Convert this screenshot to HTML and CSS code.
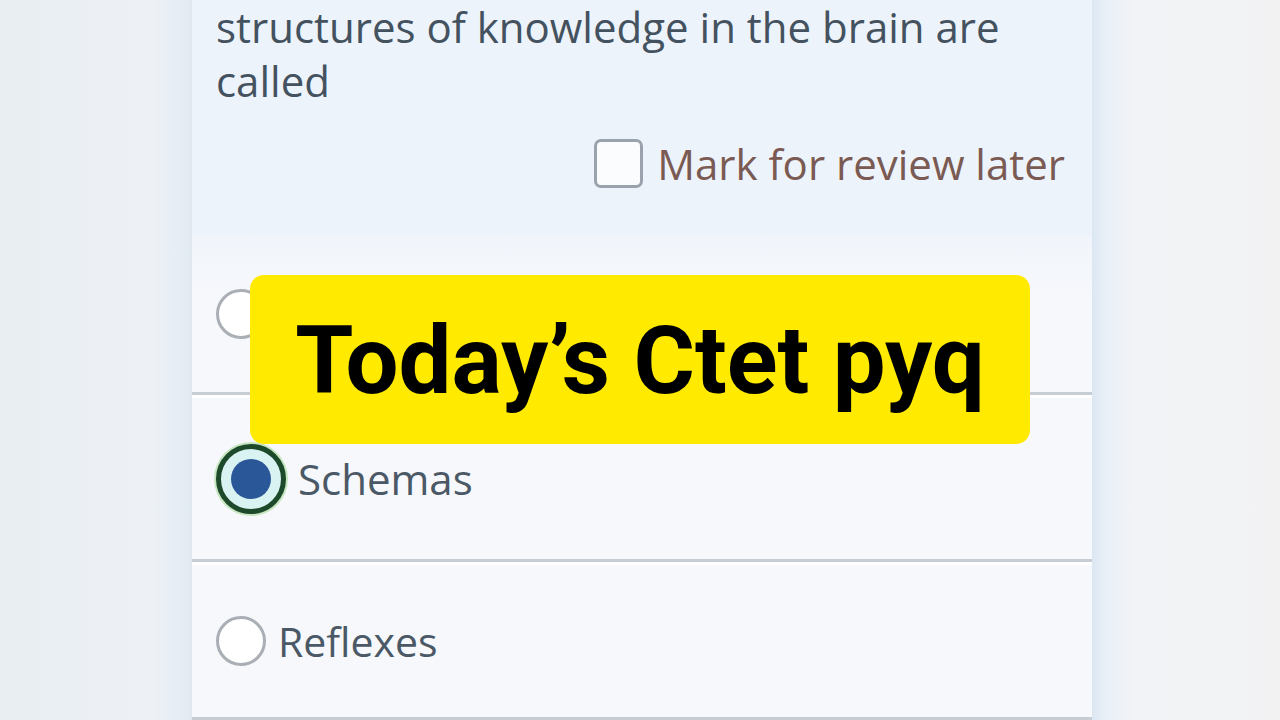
FILE: index.html
```html
<!DOCTYPE html>
<html>
<head>
<meta charset="utf-8">
<link rel="stylesheet" href="styles.css">
</head>
<body>
<div class="page">
  <div class="side side-left"></div>
  <main class="card">
    <section class="question">
      <p class="q-text">structures of knowledge in the brain are<br>called</p>
      <label class="review">
        <span class="checkbox"></span>
        <span class="review-label">Mark for review later</span>
      </label>
    </section>
    <div class="option option-first">
      <span class="radio"></span>
    </div>
    <div class="option option-selected">
      <span class="radio radio-on"><span class="dot"></span></span>
      <span class="opt-label">Schemas</span>
    </div>
    <div class="option option-last">
      <span class="radio"></span>
      <span class="opt-label opt-label-last">Reflexes</span>
    </div>
  </main>
  <div class="side side-right"></div>
  <div class="banner">Today’s Ctet pyq</div>
</div>
</body>
</html>
```
FILE: styles.css
```css
html, body {
  margin: 0;
  padding: 0;
}
body {
  width: 1280px;
  height: 720px;
  overflow: hidden;
  background: #eef1f5;
  font-family: "Open Sans", "Noto Sans", sans-serif;
}
.page {
  position: relative;
  display: grid;
  grid-template-columns: 190px 902px 1fr;
  height: 720px;
}
.side-left {
  background: linear-gradient(90deg, #e9eef3 0%, #edf1f6 80%, #e3ebf3 100%);
}
.side-right {
  background: linear-gradient(90deg, #dbe7f3 0px, #e9f0f7 14px, #f1f3f6 40px, #f2f2f3 100%);
}
.card {
  display: flex;
  flex-direction: column;
  border-left: 2px solid #e1e8ef;
}
.question {
  height: 235px;
  background: #edf3fb;
  padding: 0 27px 0 24px;
  box-sizing: border-box;
  display: flex;
  flex-direction: column;
}
.q-text {
  margin: 0;
  font-size: 42px;
  line-height: 54px;
  color: #44525f;
}
.review {
  align-self: flex-end;
  display: flex;
  align-items: center;
  gap: 14px;
  margin-top: 27px;
}
.checkbox {
  width: 43px;
  height: 43px;
  border: 3px solid #9aa3ad;
  border-radius: 7px;
  background: #fbfcfe;
}
.review-label {
  font-size: 42px;
  color: #7a5a52;
}
.option {
  display: flex;
  align-items: center;
  gap: 12px;
  padding-left: 24px;
  background: #f6f8fc;
  border-bottom: 3px solid #c7cdd4;
  box-sizing: border-box;
}
.option-first {
  height: 160px;
  background: linear-gradient(180deg, #f1f5fb 0%, #f6f8fc 40%);
}
.option-selected {
  height: 167px;
  border-top: 3px solid #ffffff;
}
.option-last {
  height: 158px;
  border-top: 3px solid #ffffff;
}
.radio {
  width: 44px;
  height: 44px;
  border: 3px solid #a9afb5;
  border-radius: 50%;
  background: #ffffff;
  flex: none;
}
.radio-on {
  width: 60px;
  height: 60px;
  border: 5px solid #1d4a2a;
  background: #d9f2f2;
  display: flex;
  align-items: center;
  justify-content: center;
  box-shadow: 0 0 0 2px #c7e6c0;
}
.dot {
  width: 40px;
  height: 40px;
  border-radius: 50%;
  background: #2a5798;
}
.opt-label {
  font-size: 42px;
  color: #4b5966;
}
.opt-label-last {
  font-size: 41px;
}
.banner {
  position: absolute;
  left: 250px;
  top: 275px;
  width: 780px;
  height: 169px;
  box-sizing: border-box;
  background: #ffea00;
  border-radius: 14px;
  display: flex;
  align-items: center;
  justify-content: center;
  font-family: Roboto, "Liberation Sans", sans-serif;
  font-weight: 700;
  font-size: 94px;
  color: #000000;
  padding-top: 2px;
}
```
